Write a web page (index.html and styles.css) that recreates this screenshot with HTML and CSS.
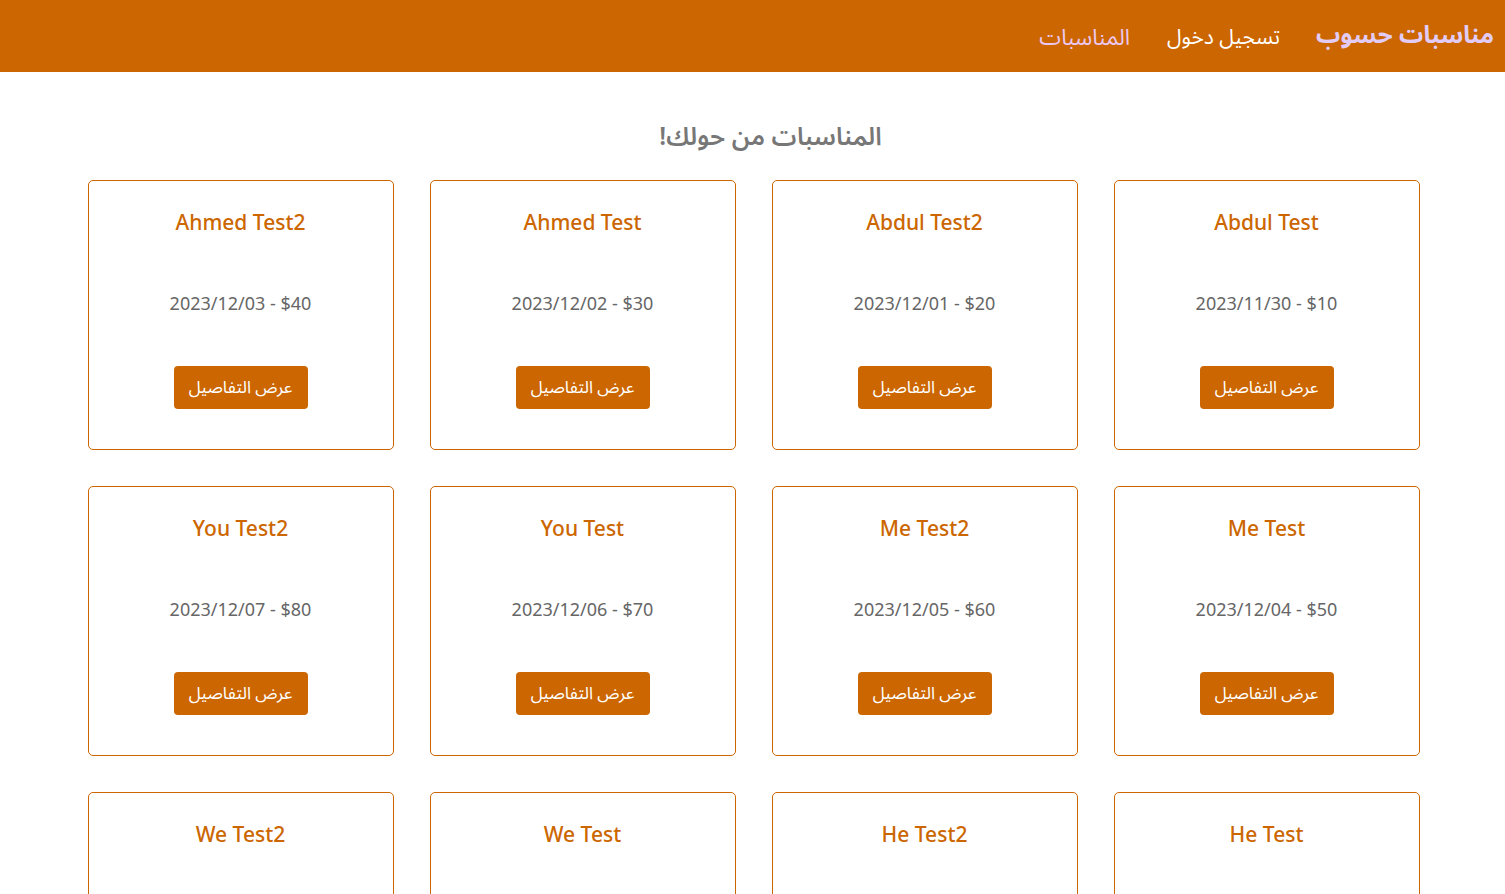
FILE: index.html
```html
<!DOCTYPE html>
<html lang="ar" dir="rtl">
<head>
<meta charset="utf-8">
<title>مناسبات حسوب</title>
<link rel="stylesheet" href="styles.css">
</head>
<body>
<header class="navbar">
  <a class="brand" href="#">مناسبات حسوب</a>
  <nav class="nav">
    <a class="nav-link login" href="#">تسجيل دخول</a>
    <a class="nav-link events" href="#">المناسبات</a>
  </nav>
</header>
<main class="container">
  <h1 class="page-title">المناسبات من حولك!</h1>
  <div class="grid">
    <div class="card"><h2 class="card-title">Abdul Test</h2><p class="card-meta">2023/11/30 - $10</p><a class="btn" href="#">عرض التفاصيل</a></div>
    <div class="card"><h2 class="card-title">Abdul Test2</h2><p class="card-meta">2023/12/01 - $20</p><a class="btn" href="#">عرض التفاصيل</a></div>
    <div class="card"><h2 class="card-title">Ahmed Test</h2><p class="card-meta">2023/12/02 - $30</p><a class="btn" href="#">عرض التفاصيل</a></div>
    <div class="card"><h2 class="card-title">Ahmed Test2</h2><p class="card-meta">2023/12/03 - $40</p><a class="btn" href="#">عرض التفاصيل</a></div>
    <div class="card"><h2 class="card-title">Me Test</h2><p class="card-meta">2023/12/04 - $50</p><a class="btn" href="#">عرض التفاصيل</a></div>
    <div class="card"><h2 class="card-title">Me Test2</h2><p class="card-meta">2023/12/05 - $60</p><a class="btn" href="#">عرض التفاصيل</a></div>
    <div class="card"><h2 class="card-title">You Test</h2><p class="card-meta">2023/12/06 - $70</p><a class="btn" href="#">عرض التفاصيل</a></div>
    <div class="card"><h2 class="card-title">You Test2</h2><p class="card-meta">2023/12/07 - $80</p><a class="btn" href="#">عرض التفاصيل</a></div>
    <div class="card"><h2 class="card-title">He Test</h2><p class="card-meta">2023/12/08 - $90</p><a class="btn" href="#">عرض التفاصيل</a></div>
    <div class="card"><h2 class="card-title">He Test2</h2><p class="card-meta">2023/12/09 - $100</p><a class="btn" href="#">عرض التفاصيل</a></div>
    <div class="card"><h2 class="card-title">We Test</h2><p class="card-meta">2023/12/10 - $110</p><a class="btn" href="#">عرض التفاصيل</a></div>
    <div class="card"><h2 class="card-title">We Test2</h2><p class="card-meta">2023/12/11 - $120</p><a class="btn" href="#">عرض التفاصيل</a></div>
  </div>
</main>
</body>
</html>
```
FILE: styles.css
```css
* { box-sizing: border-box; }
html, body {
  margin: 0;
  padding: 0;
  background: #fff;
  font-family: "Noto Sans", "Noto Sans Arabic", "DejaVu Sans", sans-serif;
}
a { text-decoration: none; }

.navbar {
  height: 72px;
  background: #cc6600;
  display: flex;
  align-items: center;
  padding: 0 11px 4px 0;
  gap: 36px;
}
.brand {
  color: #e2ccf5;
  font-size: 24px;
  font-weight: 700;
  line-height: 1;
}
.nav {
  display: flex;
  gap: 37px;
  align-items: center;
  padding-top: 4px;
}
.nav-link {
  font-size: 21px;
  line-height: 1;
}
.login { color: #ffffff; }
.events { color: #ecc8f0; font-size: 22px; }

.container {
  width: 1332px;
  margin: 0 auto;
  padding-top: 46px;
  position: relative;
  left: 1px;
}
.page-title {
  margin: 0 0 28px;
  text-align: center;
  font-size: 25px;
  font-weight: 600;
  color: #777;
  line-height: 34px;
  padding-left: 34px;
}
.grid {
  display: grid;
  grid-template-columns: repeat(4, 306px);
  column-gap: 36px;
  row-gap: 36px;
}
.card {
  height: 270px;
  border: 1px solid #cc6600;
  border-radius: 5px;
  display: flex;
  flex-direction: column;
  align-items: center;
  padding-top: 26px;
}
.card-title {
  margin: 0;
  font-size: 21px;
  font-weight: 500;
  color: #cc6600;
  line-height: 30px;
}
.card-meta {
  direction: ltr;
  margin: 54px 0 0;
  font-size: 18px;
  color: #666;
  line-height: 24px;
}
.btn {
  margin-top: 51px;
  width: 134px;
  height: 43px;
  background: #cc6600;
  color: #fff;
  border-radius: 4px;
  display: flex;
  align-items: center;
  justify-content: center;
  font-size: 17px;
}
```
